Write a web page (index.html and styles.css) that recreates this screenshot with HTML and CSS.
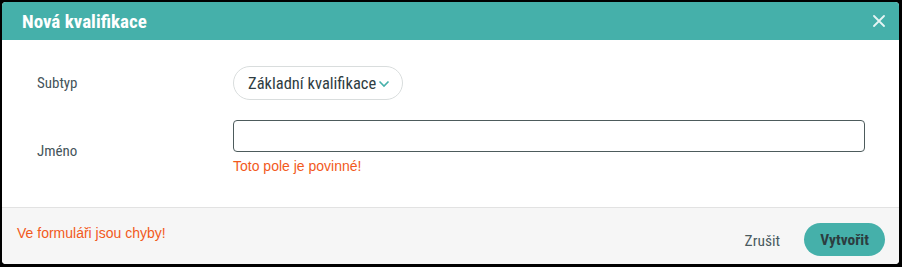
FILE: index.html
```html
<!DOCTYPE html>
<html lang="cs">
<head>
<meta charset="utf-8">
<title>Nová kvalifikace</title>
<link rel="stylesheet" href="styles.css">
</head>
<body>
<div class="modal">
  <div class="modal-header">
    <h1 class="modal-title">Nová kvalifikace</h1>
    <button class="close" aria-label="Zavřít">
      <svg width="12" height="12" viewBox="0 0 12 12"><path d="M1 1L11 11M11 1L1 11" stroke="#e6f5f4" stroke-width="1.8" stroke-linecap="round"/></svg>
    </button>
  </div>
  <div class="modal-body">
    <div class="row row-subtyp">
      <div class="label">Subtyp</div>
      <div class="field">
        <button class="select">Základní kvalifikace<svg class="chev" width="12" height="8" viewBox="0 0 12 8"><path d="M1.5 1.5L6 6L10.5 1.5" fill="none" stroke="#45b0aa" stroke-width="1.6"/></svg></button>
      </div>
    </div>
    <div class="row row-jmeno">
      <div class="label label-jmeno">Jméno</div>
      <div class="field field-grow">
        <input class="input" type="text">
        <div class="error">Toto pole je povinné!</div>
      </div>
    </div>
  </div>
  <div class="modal-footer">
    <div class="form-error">Ve formuláři jsou chyby!</div>
    <div class="actions">
      <button class="btn-cancel">Zrušit</button>
      <button class="btn-primary">Vytvořit</button>
    </div>
  </div>
</div>
</body>
</html>
```
FILE: styles.css
```css
html, body {
  margin: 0;
  padding: 0;
  background: #000;
}
body {
  width: 902px;
  height: 267px;
  padding: 2px 3px 3px 2px;
  box-sizing: border-box;
  font-family: "Roboto", "Liberation Sans", sans-serif;
}
.modal {
  width: 897px;
  height: 262px;
  background: #fff;
  border-radius: 4px;
  overflow: hidden;
  display: flex;
  flex-direction: column;
}
.modal-header {
  height: 38px;
  background: #45b0aa;
  display: flex;
  align-items: center;
  justify-content: space-between;
  padding: 0 14px 0 20px;
  flex: none;
}
.modal-title {
  margin: 0;
  color: #fff;
  font-size: 19px;
  font-weight: 700;
  font-stretch: 75%;
  line-height: 1;
}
.close {
  background: none;
  border: 0;
  padding: 0;
  width: 12px;
  height: 12px;
  display: flex;
  cursor: pointer;
}
.modal-body {
  flex: 1;
  padding: 26px 34px 0 35px;
}
.row {
  display: flex;
}
.label {
  width: 196px;
  flex: none;
  color: #45545a;
  font-size: 15px;
  font-stretch: 75%;
  line-height: 34px;
}
.row-jmeno {
  margin-top: 20px;
}
.label-jmeno {
  padding-top: 15px;
  line-height: 32px;
}
.field-grow {
  flex: 1;
}
.select {
  height: 34px;
  box-sizing: border-box;
  border: 1px solid #d9dddd;
  border-radius: 17px;
  background: #fff;
  padding: 0 12px 0 14px;
  display: flex;
  align-items: center;
  gap: 2px;
  font-family: "Roboto", sans-serif;
  font-size: 16.5px;
  font-stretch: 75%;
  color: #2f3d42;
}
.chev {
  margin-top: 1px;
}
.input {
  display: block;
  width: 100%;
  height: 32px;
  box-sizing: border-box;
  border: 1px solid #4d5b5c;
  border-radius: 4px;
  margin: 0;
  padding: 0 8px;
  outline: none;
}
.error {
  margin-top: 6px;
  color: #f25a1c;
  font-family: "Liberation Sans", Arial, sans-serif;
  font-size: 14px;
  line-height: 17px;
}
.modal-footer {
  flex: none;
  height: 57px;
  box-sizing: border-box;
  border-top: 1px solid #e2e2e2;
  background: #f6f6f6;
  display: flex;
  justify-content: space-between;
  align-items: flex-start;
  padding: 0 14px 0 15px;
}
.form-error {
  margin-top: 17px;
  color: #f25a1c;
  font-family: "Liberation Sans", Arial, sans-serif;
  font-size: 14px;
  line-height: 16px;
}
.actions {
  display: flex;
  align-items: center;
  gap: 24px;
  margin-top: 15px;
}
.btn-cancel {
  background: none;
  border: 0;
  padding: 0;
  font-family: "Roboto", sans-serif;
  font-size: 15.5px;
  font-stretch: 75%;
  color: #4a5a60;
  margin-top: 2px;
}
.btn-primary {
  height: 33px;
  padding: 0 16px;
  border: 0;
  border-radius: 17px;
  background: #45b0aa;
  color: #2c3d40;
  font-family: "Roboto", sans-serif;
  font-size: 15.5px;
  font-weight: 700;
  font-stretch: 75%;
}
```
